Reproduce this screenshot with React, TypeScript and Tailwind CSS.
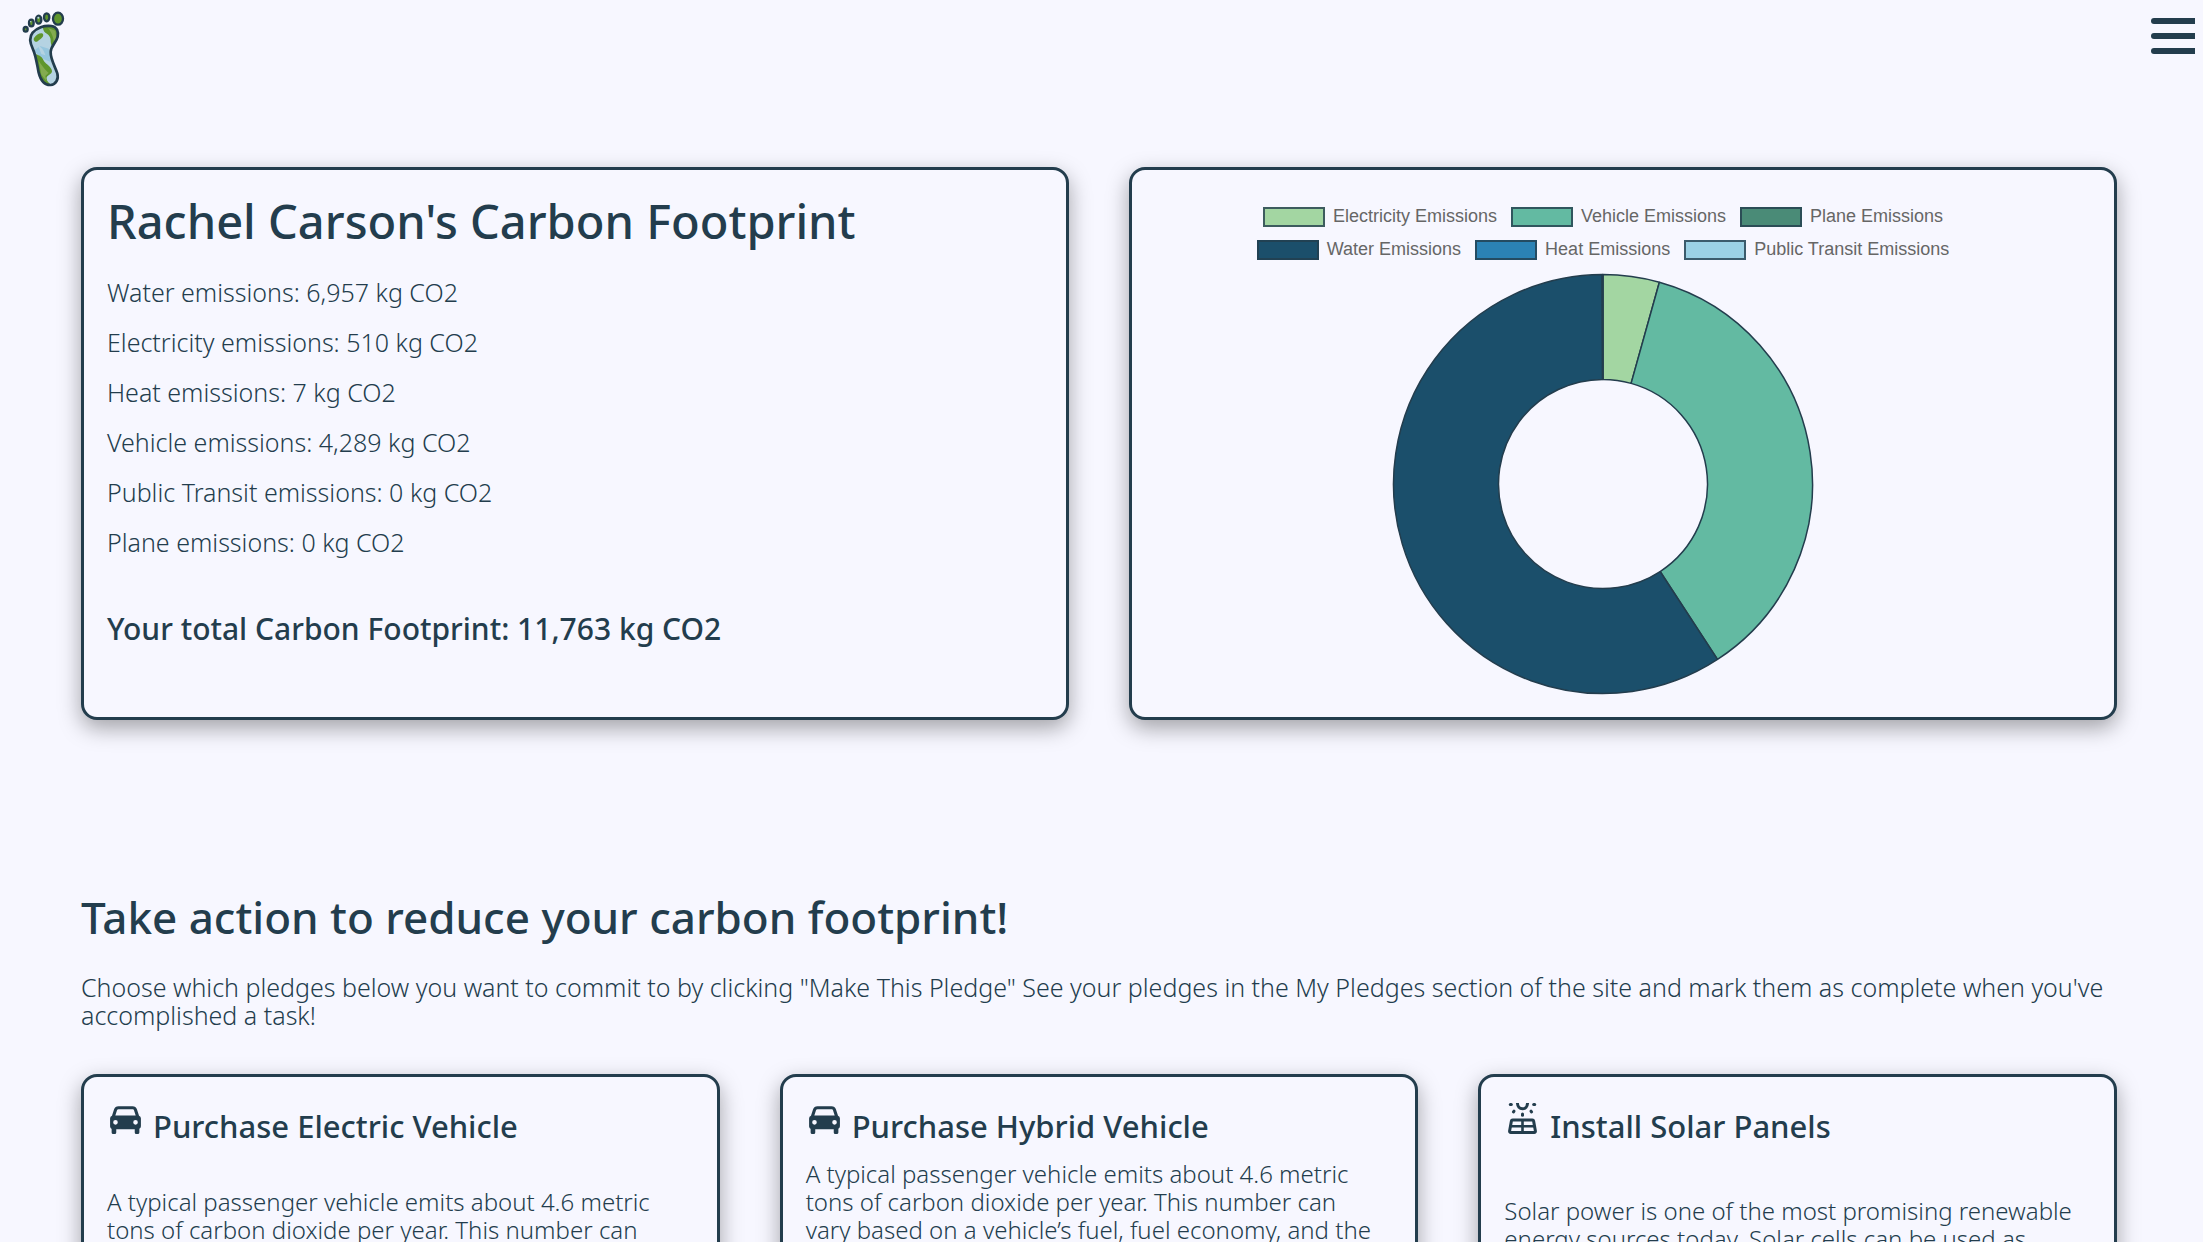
import type { ReactNode } from "react";
import { BiSolidCar } from "react-icons/bi";

const INK = "#233d4d";

type Emission = { label: string; kg: number; fill: string; swatch: string };

const series: Emission[] = [
  { label: "Electricity Emissions", kg: 510, fill: "#a3d6a2", swatch: "bg-[#a3d6a2]" },
  { label: "Vehicle Emissions", kg: 4289, fill: "#63baa2", swatch: "bg-[#63baa2]" },
  { label: "Plane Emissions", kg: 0, fill: "#4a8b77", swatch: "bg-[#4a8b77]" },
  { label: "Water Emissions", kg: 6957, fill: "#1b4f6b", swatch: "bg-[#1b4f6b]" },
  { label: "Heat Emissions", kg: 7, fill: "#2b82b5", swatch: "bg-[#2b82b5]" },
  { label: "Public Transit Emissions", kg: 0, fill: "#9bd1e5", swatch: "bg-[#9bd1e5]" },
];

const summary = [
  "Water emissions: 6,957 kg CO2",
  "Electricity emissions: 510 kg CO2",
  "Heat emissions: 7 kg CO2",
  "Vehicle emissions: 4,289 kg CO2",
  "Public Transit emissions: 0 kg CO2",
  "Plane emissions: 0 kg CO2",
];

function FootLogo() {
  const sole =
    "M100 60C118 63 122 78 119 92C115 110 99 118 98 138C97 158 111 182 118 202C123 220 113 236 98 237C78 238 67 220 62 200C57 176 54 150 45 130C35 110 34 92 44 80C56 66 78 57 100 60Z";
  return (
    <svg viewBox="0 0 156 252" className="h-[84px] w-[52px]" role="img" aria-label="Carbon footprint home">
      <defs>
        <clipPath id="sole">
          <path d={sole} />
        </clipPath>
      </defs>
      <path d={sole} fill="#b5d3e2" />
      <g clipPath="url(#sole)">
        <path d="M48 134L66 120L92 128L98 168L78 160L60 146Z" fill="#96c6de" />
        <path d="M60 118C74 126 78 136 82 148L70 144Z" fill="#b5d3e2" />
        <path d="M74 54H124V112L108 122C100 122 98 112 98 104C98 92 92 86 82 80C76 76 74 66 74 54Z" fill="#5f962d" />
        <path d="M90 66C98 76 106 90 108 110L116 104L112 74Z" fill="#83ab50" />
        <path d="M48 96C54 88 62 82 70 82C77 82 77 90 73 94C67 100 62 104 57 107C50 109 45 102 48 96Z" fill="#5f962d" />
        <path d="M52 144C66 148 74 154 78 166C84 174 102 184 102 196C102 206 84 208 86 218C87 228 96 232 104 240L66 244L50 190Z" fill="#5f962d" />
        <path d="M62 164C72 180 84 194 92 200L82 210L86 226L70 206Z" fill="#83ab50" />
      </g>
      <path d={sole} fill="none" stroke={INK} strokeWidth="8" />
      <g fill="#5f962d" stroke={INK} strokeWidth="7">
        <ellipse cx="120" cy="38" rx="15" ry="18" />
        <ellipse cx="86" cy="34" rx="8" ry="12" />
        <ellipse cx="62" cy="41" rx="8" ry="12" />
        <ellipse cx="40" cy="51" rx="7" ry="10" />
        <ellipse cx="23" cy="70" rx="6" ry="7" />
      </g>
      <g fill="#b5d3e2">
        <circle cx="61" cy="35" r="3" />
        <circle cx="38" cy="47" r="2" />
      </g>
    </svg>
  );
}

function SolarIcon() {
  return (
    <svg viewBox="4 5 37 37" className="size-[37px] shrink-0" fill="none" stroke="currentColor" strokeWidth="3" aria-hidden="true">
      <g strokeLinecap="round">
        <path d="M10.3 9.5H11.3" />
        <path d="M33.7 9.5H34.7" />
        <path d="M13.4 16.9L14 16.2" />
        <path d="M31.6 16.9L31 16.2" />
        <path d="M22.5 19.1V20.2" />
      </g>
      <path d="M17.4 8C17.6 11.4 19.6 13.8 22.5 13.8C25.4 13.8 27.4 11.4 27.6 8" />
      <path strokeLinejoin="round" d="M12.6 25H32.4C33 25 33.5 25.4 33.6 26L35.4 36C35.5 36.8 35 37.5 34.2 37.5H10.8C10 37.5 9.5 36.8 9.6 36L11.4 26C11.5 25.4 12 25 12.6 25Z" />
      <path strokeWidth="2.6" d="M22.5 25V37.5M10.6 31.2H34.4" />
    </svg>
  );
}

function Donut() {
  const total = series.reduce((sum, s) => sum + s.kg, 0);
  const point = (r: number, a: number) => `${211 + r * Math.sin(a)} ${211 - r * Math.cos(a)}`;
  let angle = 0;
  return (
    <svg viewBox="0 0 422 422" className="size-[422px]" role="img" aria-label="Emissions by source">
      {series
        .filter((s) => s.kg > 0)
        .map((s) => {
          const a = angle;
          const b = a + (s.kg / total) * Math.PI * 2;
          angle = b;
          const large = b - a > Math.PI ? 1 : 0;
          return (
            <path
              key={s.label}
              d={`M${point(209.5, a)}A209.5 209.5 0 ${large} 1 ${point(209.5, b)}L${point(104.5, b)}A104.5 104.5 0 ${large} 0 ${point(104.5, a)}Z`}
              fill={s.fill}
              stroke={INK}
              strokeWidth="1.5"
              strokeLinejoin="bevel"
            />
          );
        })}
    </svg>
  );
}

function LegendRow({ items }: { items: Emission[] }) {
  return (
    <ul className="flex h-5 gap-[14px]">
      {items.map((s) => (
        <li key={s.label} className="flex items-start gap-2">
          <span className={`h-5 w-[62px] border-2 border-[#233d4d]/80 ${s.swatch}`} />
          <span className="whitespace-nowrap font-['Liberation_Sans',sans-serif] text-[18px] leading-[18px] text-[#666666]">{s.label}</span>
        </li>
      ))}
    </ul>
  );
}

function Card({ className, children }: { className: string; children: ReactNode }) {
  return (
    <article className={`rounded-2xl border-3 border-[#233d4d] bg-[#f7f7ff] pl-[23px] shadow-[0_8px_22px_rgba(0,0,0,0.35)] ${className}`}>
      {children}
    </article>
  );
}

function Pledge({ icon, title, textClass, children }: { icon: ReactNode; title: string; textClass: string; children: ReactNode }) {
  return (
    <Card className="pt-[23px] pr-[35px] pb-12">
      <div className="flex items-start gap-[9px]">
        {icon}
        <h3 className="mt-2 text-[31px] leading-9 font-medium">{title}</h3>
      </div>
      <p className={`text-[24px] leading-7 font-light ${textClass}`}>{children}</p>
    </Card>
  );
}

export default function App() {
  return (
    <div className="h-screen overflow-hidden bg-[#f7f7ff] font-['Noto_Sans',sans-serif] text-[#233d4d]">
      <header className="flex h-[167px] items-start justify-between pt-[6px] pr-2 pl-[18px]">
        <a href="#home">
          <FootLogo />
        </a>
        <button type="button" aria-label="Open menu" className="mt-3 flex w-11 flex-col gap-[9px]">
          <span className="h-[6px] rounded-l-sm bg-[#233d4d]" />
          <span className="h-[6px] rounded-l-sm bg-[#233d4d]" />
          <span className="h-[6px] rounded-l-sm bg-[#233d4d]" />
        </button>
      </header>

      <main className="pr-[86px] pl-[81px]">
        <section className="grid grid-cols-2 gap-[60px]">
          <Card className="pt-[23px] pr-[23px]">
            <h1 className="text-[47px] leading-[56px] font-medium">Rachel Carson's Carbon Footprint</h1>
            <ul className="mt-[29px] flex flex-col gap-[22px] text-[25px] leading-7 font-light">
              {summary.map((line) => (
                <li key={line}>{line}</li>
              ))}
            </ul>
            <p className="mt-[55px] text-[30px] leading-9 font-medium">Your total Carbon Footprint: 11,763 kg CO2</p>
          </Card>
          <Card className="pt-[37px] pr-[63px] pb-[22px]">
            <div className="flex flex-col items-center gap-[13px]">
              <LegendRow items={series.slice(0, 3)} />
              <LegendRow items={series.slice(3)} />
              <Donut />
            </div>
          </Card>
        </section>

        <section className="mt-[171px]">
          <h2 className="text-[44px] leading-[52px] font-medium">Take action to reduce your carbon footprint!</h2>
          <p className="mt-[30px] text-[25px] leading-7 font-light">
            Choose which pledges below you want to commit to by clicking "Make This Pledge" See your pledges in the My Pledges section of the site and
            mark them as complete when you've accomplished a task!
          </p>
          <div className="mt-[45px] grid grid-cols-3 gap-[60px]">
            <Pledge icon={<BiSolidCar className="size-[37px] shrink-0" aria-hidden="true" />} title="Purchase Electric Vehicle" textClass="mt-11">
              A typical passenger vehicle emits about 4.6 metric tons of carbon dioxide per year. This number can
            </Pledge>
            <Pledge icon={<BiSolidCar className="size-[37px] shrink-0" aria-hidden="true" />} title="Purchase Hybrid Vehicle" textClass="mt-4">
              A typical passenger vehicle emits about 4.6 metric tons of carbon dioxide per year. This number can vary based on a vehicle’s fuel, fuel
              economy, and the
            </Pledge>
            <Pledge icon={<SolarIcon />} title="Install Solar Panels" textClass="mt-[53px]">
              Solar power is one of the most promising renewable energy sources today. Solar cells can be used as
            </Pledge>
          </div>
        </section>
      </main>
    </div>
  );
}
